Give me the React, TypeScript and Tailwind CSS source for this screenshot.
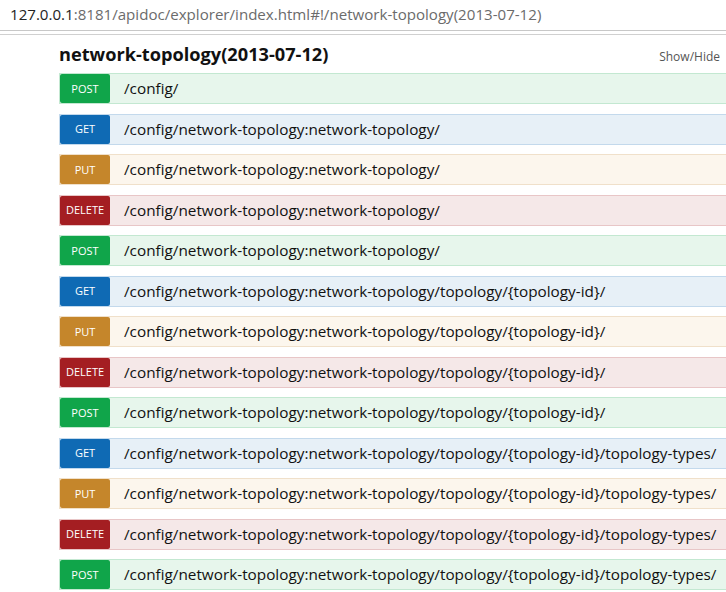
const ROWS: { method: 'POST' | 'GET' | 'PUT' | 'DELETE'; path: string }[] = [
  { method: 'POST', path: '/config/' },
  { method: 'GET', path: '/config/network-topology:network-topology/' },
  { method: 'PUT', path: '/config/network-topology:network-topology/' },
  { method: 'DELETE', path: '/config/network-topology:network-topology/' },
  { method: 'POST', path: '/config/network-topology:network-topology/' },
  { method: 'GET', path: '/config/network-topology:network-topology/topology/{topology-id}/' },
  { method: 'PUT', path: '/config/network-topology:network-topology/topology/{topology-id}/' },
  { method: 'DELETE', path: '/config/network-topology:network-topology/topology/{topology-id}/' },
  { method: 'POST', path: '/config/network-topology:network-topology/topology/{topology-id}/' },
  { method: 'GET', path: '/config/network-topology:network-topology/topology/{topology-id}/topology-types/' },
  { method: 'PUT', path: '/config/network-topology:network-topology/topology/{topology-id}/topology-types/' },
  { method: 'DELETE', path: '/config/network-topology:network-topology/topology/{topology-id}/topology-types/' },
  { method: 'POST', path: '/config/network-topology:network-topology/topology/{topology-id}/topology-types/' },
];

const STYLES = {
  GET: { row: 'bg-[#e7f0f7] border-[#c3d9ec]', badge: 'bg-[#0f6ab4]' },
  POST: { row: 'bg-[#e7f6ec] border-[#c3e8d1]', badge: 'bg-[#10a54a]' },
  PUT: { row: 'bg-[#fcf6ed] border-[#f0e0ca]', badge: 'bg-[#c5862b]' },
  DELETE: { row: 'bg-[#f5e8e8] border-[#e8c6c7]', badge: 'bg-[#a41e22]' },
};

export default function App() {
  return (
    <div className="w-[726px] h-[592px] overflow-hidden bg-white font-['Open_Sans',sans-serif] text-[#111]">
      {/* address bar */}
      <div className="h-[31px] border-b border-[#c8c8c8] pl-[10px] flex items-center text-[15.1px] leading-none whitespace-nowrap">
        <span className="text-[#222]">127.0.0.1</span>
        <span className="text-[#6b6b6b]">:8181/apidoc/explorer/index.html#!/network-topology(2013-07-12)</span>
      </div>
      <div className="h-[4px] border-b border-[#d0d0d0]" />

      <div className="pl-[59px]">
        <div className="flex items-end justify-between h-[38px] pb-[10px]">
          <h2 className="text-[18.2px] font-bold leading-none">network-topology(2013-07-12)</h2>
          <span className="text-[12px] text-[#555] pr-[6px] leading-none">Show/Hide</span>
        </div>

        <div className="flex flex-col gap-[9.5px]">
          {ROWS.map((r, i) => (
            <div key={i} className={`flex items-center h-[31px] border border-r-0 ${STYLES[r.method].row} whitespace-nowrap`}>
              <span className={`shrink-0 w-[50px] h-[29px] rounded-[2px] flex items-center justify-center pt-[1px] text-white text-[11px] ${STYLES[r.method].badge}`}>
                {r.method}
              </span>
              <span className="ml-[14px] text-[15.3px]">{r.path}</span>
            </div>
          ))}
        </div>
      </div>
    </div>
  );
}
